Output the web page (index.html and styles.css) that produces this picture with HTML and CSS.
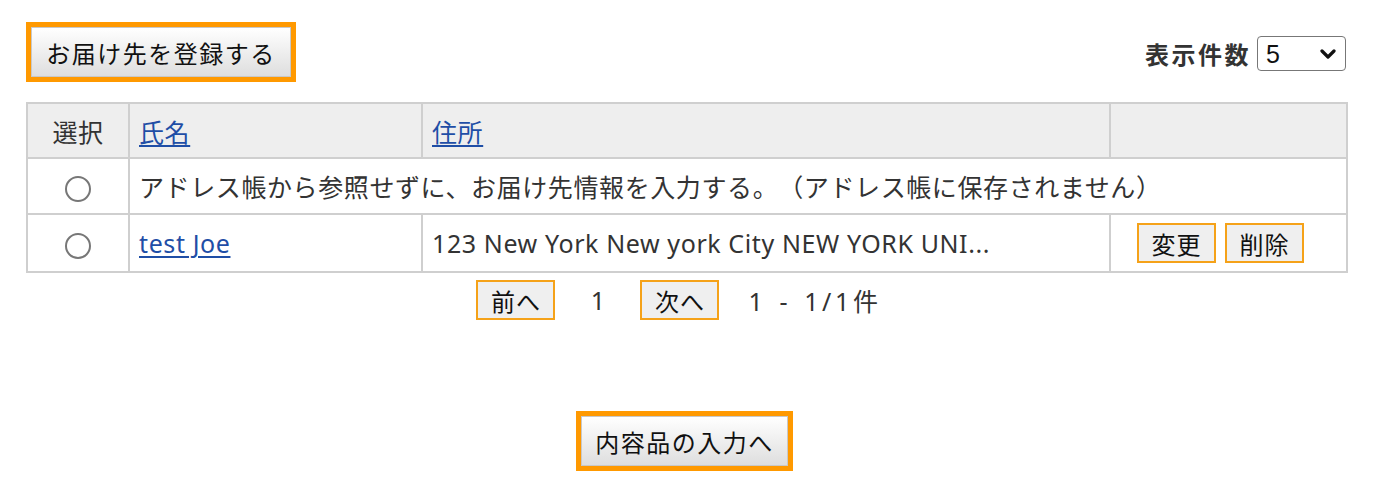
FILE: index.html
```html
<!DOCTYPE html>
<html lang="ja">
<head>
<meta charset="utf-8">
<title>お届け先</title>
<link rel="stylesheet" href="styles.css">
</head>
<body>
<div class="page">
  <div class="topbar">
    <div class="big-btn-wrap"><button class="big-btn" type="button">お届け先を登録する</button></div>
    <div class="per-page">
      <span class="per-page-label">表示件数</span>
      <span class="select-wrap">
        <select class="select"><option>5</option><option>10</option><option>20</option></select>
        <svg class="chevron" width="16" height="10" viewBox="0 0 16 10"><path d="M2 2 L8 8 L14 2" fill="none" stroke="#111" stroke-width="3.2" stroke-linecap="round" stroke-linejoin="round"/></svg>
      </span>
    </div>
  </div>

  <table class="addr-table">
    <colgroup>
      <col class="c1"><col class="c2"><col class="c3"><col class="c4">
    </colgroup>
    <thead>
      <tr class="head-row">
        <th class="center">選択</th>
        <th><a href="#" class="link">氏名</a></th>
        <th><a href="#" class="link">住所</a></th>
        <th></th>
      </tr>
    </thead>
    <tbody>
      <tr class="row1">
        <td class="center"><input type="radio" name="sel" class="radio"></td>
        <td colspan="3">アドレス帳から参照せずに、お届け先情報を入力する。（アドレス帳に保存されません）</td>
      </tr>
      <tr class="row2">
        <td class="center"><input type="radio" name="sel" class="radio"></td>
        <td><a href="#" class="link">test Joe</a></td>
        <td>123 New York New york City NEW YORK UNI...</td>
        <td class="center actions"><button class="small-btn" type="button">変更</button><button class="small-btn" type="button">削除</button></td>
      </tr>
    </tbody>
  </table>

  <div class="pager">
    <button class="small-btn pager-btn" type="button">前へ</button>
    <span class="pager-num">1</span>
    <button class="small-btn pager-btn" type="button">次へ</button>
    <span class="pager-count">1 - 1/1件</span>
  </div>

  <div class="bottom">
    <div class="big-btn-wrap"><button class="big-btn bottom-btn" type="button">内容品の入力へ</button></div>
  </div>
</div>
</body>
</html>
```
FILE: styles.css
```css
* { box-sizing: border-box; }
body {
  margin: 0;
  background: #fff;
  color: #333;
  font-family: "Noto Sans", "Noto Sans CJK JP", sans-serif;
  font-size: 25px;
  text-spacing-trim: space-all;
}
.page {
  width: 1320px;
  margin-left: 26px;
  padding-top: 22px;
}
.topbar {
  display: flex;
  justify-content: space-between;
  align-items: center;
  height: 60px;
}
.big-btn-wrap {
  border: 5px solid #ff9900;
  display: inline-flex;
}
.big-btn {
  height: 50px;
  width: 260px;
  border: 1px solid #c8c8c8;
  background: linear-gradient(#ffffff, #dedede);
  font-family: "Noto Sans CJK JP", sans-serif;
  font-size: 24px;
  color: #111;
  letter-spacing: 1.5px;
  padding: 0;
}
.per-page {
  display: flex;
  align-items: center;
  gap: 6px;
  padding-top: 2px;
}
.per-page-label {
  font-weight: bold;
  font-family: "Noto Sans CJK JP", sans-serif;
  font-size: 24px;
  color: #333;
  letter-spacing: 2.5px;
}
.select-wrap {
  position: relative;
  display: inline-block;
  height: 35px;
}
.select {
  appearance: none;
  -webkit-appearance: none;
  width: 89px;
  height: 35px;
  border: 1px solid #777;
  border-radius: 4px;
  background: #fff;
  font-family: "Liberation Sans", sans-serif;
  font-size: 25px;
  color: #111;
  padding: 0 0 0 8px;
}
.chevron {
  position: absolute;
  right: 10px;
  top: 13px;
  pointer-events: none;
}
.addr-table {
  margin-top: 20px;
  width: 1320px;
  border-collapse: collapse;
  table-layout: fixed;
  border: 2px solid #cfcfcf;
}
.c1 { width: 102px; }
.c2 { width: 293px; }
.c3 { width: 688px; }
.c4 { width: 237px; }
.addr-table th,
.addr-table td {
  border: 2px solid #cfcfcf;
  padding: 0 0 0 9px;
  text-align: left;
  font-weight: normal;
  vertical-align: middle;
  white-space: nowrap;
  letter-spacing: 0.6px;
}
.addr-table th.center,
.addr-table td.center {
  text-align: center;
  padding: 0;
}
.head-row { height: 55px; background: #eeeeee; }
.row1 { height: 56px; }
.row2 { height: 58px; }
.link {
  color: #1f4ea6;
  text-decoration: underline;
  text-underline-offset: 3px;
  text-decoration-thickness: 1.5px;
}
.radio {
  appearance: none;
  -webkit-appearance: none;
  width: 26px;
  height: 26px;
  border: 2px solid #777;
  border-radius: 50%;
  margin: 0;
  background: #fff;
  vertical-align: middle;
}
.addr-table td.actions {
  padding: 0 16px 0 0;
}
.small-btn {
  height: 40px;
  width: 79px;
  border: 2px solid #f5a219;
  background: #efefef;
  font-family: "Noto Sans CJK JP", sans-serif;
  font-size: 24px;
  color: #111;
  padding: 0;
  letter-spacing: 1px;
}
.actions .small-btn + .small-btn { margin-left: 9px; }
.pager {
  display: flex;
  justify-content: center;
  align-items: center;
  margin-top: 7px;
  height: 40px;
  padding-right: 14px;
}
.pager-num {
  width: 85px;
  text-align: center;
  font-family: "Noto Sans", sans-serif;
}
.pager-count {
  margin-left: 29px;
  letter-spacing: 3.6px;
  word-spacing: 3px;
}
.bottom {
  display: flex;
  justify-content: center;
  margin-top: 91px;
  padding-right: 3px;
}
.bottom-btn {
  width: 207px;
}
```
